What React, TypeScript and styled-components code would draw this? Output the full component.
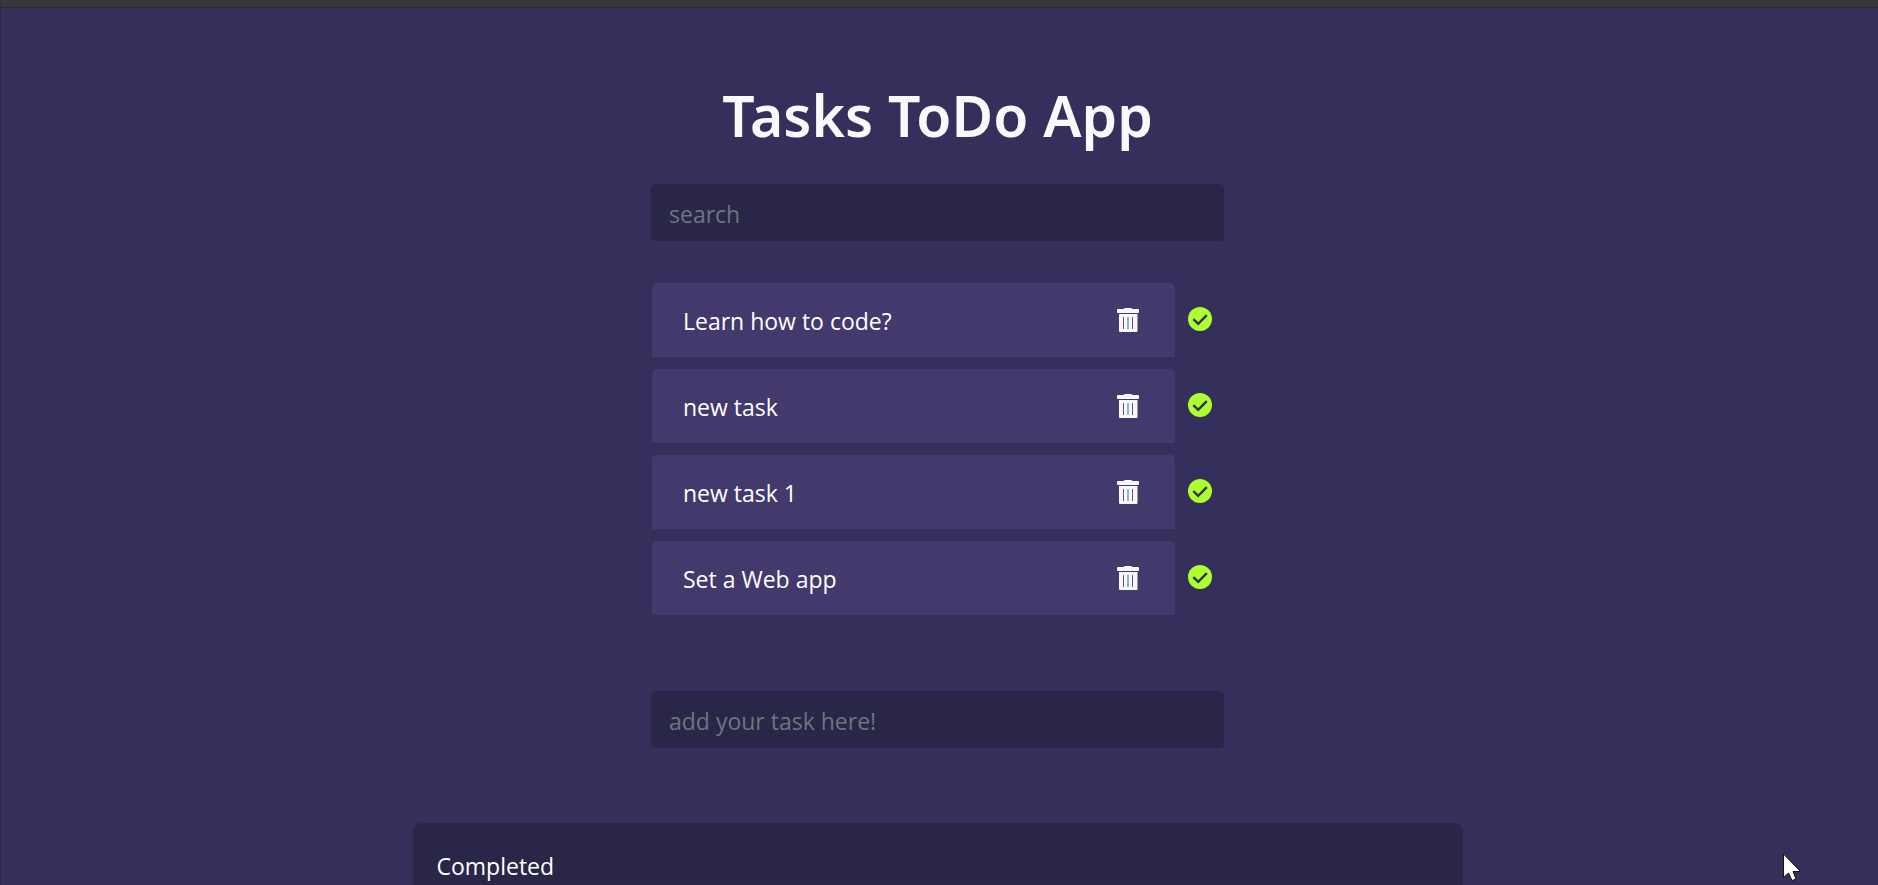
import React, { useState } from "react";
import styled, { createGlobalStyle } from "styled-components";

const GlobalStyle = createGlobalStyle`
  *, *::before, *::after { box-sizing: border-box; }
  html { background: #352f5b; }
  body {
    margin: 0;
    height: 100vh;
    overflow: hidden;
    color: #fff;
    font-family: "Segoe UI", "Open Sans", "Noto Sans", sans-serif;
    font-size: 23px;
    line-height: 36px;
  }
`;

const Page = styled.div`
  min-height: 100vh;
  border-top: 7px solid #37383b;
  border-left: 1px solid #2b2650;
  padding-right: 4px;
  display: flex;
  flex-direction: column;
  align-items: center;
  background: #352f5b;
  box-shadow: inset 0 1px 0 #29273a;
`;

const Column = styled.main`
  width: 100%;
  max-width: 573px;
  display: flex;
  flex-direction: column;
  padding-top: 72px;
`;

const Title = styled.h1`
  margin: 0 0 33px;
  color: #f8f9fa;
  text-align: center;
  white-space: nowrap;
  font-family: "Segoe UI", "Noto Sans", sans-serif;
  font-size: 57px;
  font-weight: 600;
  line-height: 72px;
`;

const Field = styled.input`
  width: 100%;
  height: 57px;
  padding: 2px 18px 0;
  border: 0;
  border-radius: 5px;
  outline: none;
  background: #2a2648;
  color: #fff;
  font: inherit;

  &::placeholder {
    color: #6c757d;
    opacity: 1;
  }
`;

const TaskList = styled.ul`
  list-style: none;
  margin: 42px 0 76px;
  padding: 0 0 0 1px;
  display: flex;
  flex-direction: column;
  gap: 12px;
`;

const TaskRow = styled.li`
  display: flex;
  align-items: center;
`;

const TaskCard = styled.div`
  flex: 1;
  height: 74px;
  padding: 0 35px 0 31px;
  display: flex;
  align-items: center;
  justify-content: space-between;
  border-radius: 5px 5px 0 0;
  background: #43396d;
`;

const TaskText = styled.span`
  padding-top: 2px;
`;

const IconButton = styled.button<{ $tone: string }>`
  width: 24px;
  height: 24px;
  padding: 0;
  border: 0;
  display: grid;
  place-items: center;
  background: none;
  color: ${(p) => p.$tone};
  cursor: pointer;
`;

const DoneSlot = styled.div`
  width: 49px;
  padding-bottom: 2px;
  display: flex;
  justify-content: center;
`;

const Completed = styled.section`
  width: 100%;
  max-width: 1050px;
  margin-top: 75px;
  padding: 25px 24px;
  border-radius: 9px;
  background: #2a2648;
`;

const CompletedTitle = styled.h2`
  margin: 0;
  font-size: 23px;
  font-weight: 400;
  line-height: 36px;
`;

const Pointer = styled.svg`
  position: absolute;
  right: 76px;
  bottom: 4px;
`;

const CheckIcon = () => (
  <svg width="24" height="24" viewBox="0 0 24 24" aria-hidden="true">
    <circle cx="12" cy="12" r="12" fill="currentColor" />
    <path d="M5.4 12.2 10.2 16.8 18.8 8.2" fill="none" stroke="#352f5b" strokeWidth="2.4" />
  </svg>
);

const TrashIcon = () => (
  <svg width="22" height="24" viewBox="0 0 22 24" aria-hidden="true">
    <path
      fill="currentColor"
      d="M7.5 0h7l.6 1H21a1 1 0 0 1 1 1v2a1 1 0 0 1-1 1H1a1 1 0 0 1-1-1V2a1 1 0 0 1 1-1h5.900zM2 6h18.500v17a1 1 0 0 1-1 1H3a1 1 0 0 1-1-1z"
    />
    <path d="M6.500 9v12M15.500 9v12" stroke="#6d4389" strokeWidth="1" />
    <path d="M11 9v12" stroke="#4a86c4" strokeWidth="1.2" />
  </svg>
);

export default function App() {
  const [tasks, setTasks] = useState(["Learn how to code?", "new task", "new task 1", "Set a Web app"]);
  const [done, setDone] = useState<string[]>([]);
  const [query, setQuery] = useState("");
  const [draft, setDraft] = useState("");

  const remove = (task: string) => setTasks(tasks.filter((t) => t !== task));
  const complete = (task: string) => {
    remove(task);
    setDone([...done, task]);
  };
  const add = (event: React.FormEvent) => {
    event.preventDefault();
    if (draft.trim()) setTasks([...tasks, draft.trim()]);
    setDraft("");
  };

  return (
    <>
      <GlobalStyle />
      <Page>
        <Column>
          <Title>Tasks ToDo App</Title>
          <Field aria-label="search" placeholder="search" value={query} onChange={(e) => setQuery(e.target.value)} />
          <TaskList>
            {tasks
              .filter((task) => task.toLowerCase().includes(query.toLowerCase()))
              .map((task) => (
                <TaskRow key={task}>
                  <TaskCard>
                    <TaskText>{task}</TaskText>
                    <IconButton $tone="#f8f9fa" aria-label={`Delete ${task}`} onClick={() => remove(task)}>
                      <TrashIcon />
                    </IconButton>
                  </TaskCard>
                  <DoneSlot>
                    <IconButton $tone="#adff2f" aria-label={`Complete ${task}`} onClick={() => complete(task)}>
                      <CheckIcon />
                    </IconButton>
                  </DoneSlot>
                </TaskRow>
              ))}
          </TaskList>
          <form onSubmit={add}>
            <Field
              aria-label="add your task here!"
              placeholder="add your task here!"
              value={draft}
              onChange={(e) => setDraft(e.target.value)}
            />
          </form>
        </Column>
        <Completed>
          <CompletedTitle>Completed</CompletedTitle>
          {done.map((task) => (
            <div key={task}>{task}</div>
          ))}
        </Completed>
      </Page>
      <Pointer width="20" height="28" viewBox="0 0 20 28" aria-hidden="true">
        <path d="M1.500 1V24.500L6.500 20 10 27.500 14 26 11 18.500H18.500z" fill="#fff" stroke="#111" />
      </Pointer>
    </>
  );
}
